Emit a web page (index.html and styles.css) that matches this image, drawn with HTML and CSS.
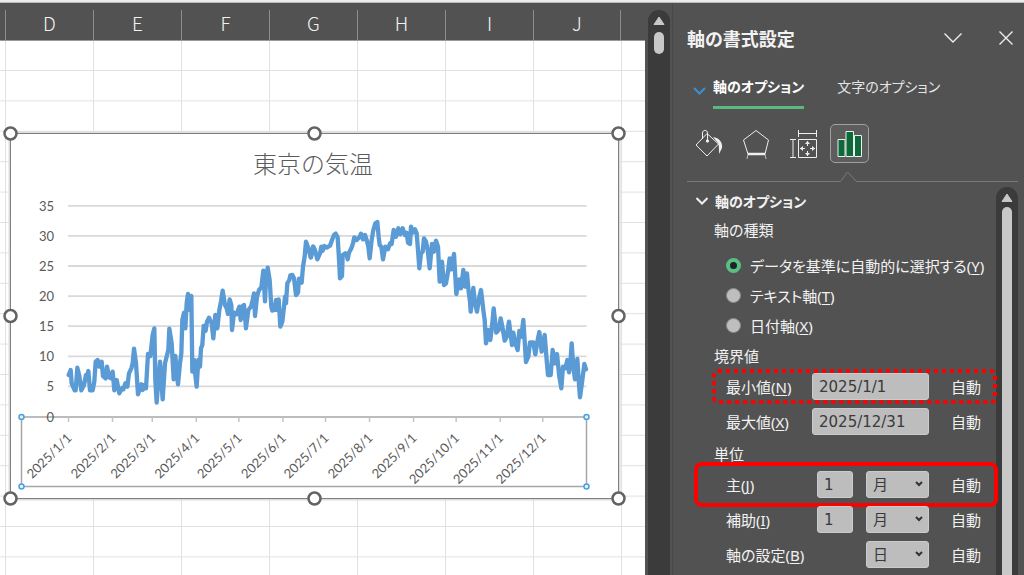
FILE: index.html
```html
<!DOCTYPE html>
<html lang="ja">
<head>
    <meta charset="UTF-8">
    <meta name="viewport" content="width=device-width, initial-scale=1.0">
    <title>東京の気温</title>
    <link rel="stylesheet" href="styles.css">
</head>
<body>
    <div class="top-strip"></div>
    <div class="app">
        <main class="sheet">
            <div class="columns">
                <span>D</span><span>E</span><span>F</span><span>G</span><span>H</span><span>I</span><span>J</span>
            </div>
            <svg class="cells" viewBox="0 41 645 534" role="img" aria-label="東京の気温">
                <!-- cell borders -->
                <g id="grid-lines" stroke="#e1e1e1" stroke-width="1"></g>

                <!-- chart area -->
                <rect x="10.500" y="133.500" width="608" height="365" fill="#fff" stroke="#dcdcdc" stroke-width="4"/>
                <rect x="10.500" y="133.500" width="608" height="365" fill="#fff" stroke="#7f7f7f"/>
                <text class="chart-title" x="313" y="173">東京の気温</text>
                <g id="value-axis"></g>

                <!-- daily temperature -->
                <g class="series">
                    <polyline transform="translate(40 200) scale(.33333)" points="86,525 92,510 95,550 104,571 107,571 112,503 118,528 124,571 132,555 138,525 141,530 145,513 150,571 158,571 163,545 167,485 173,480 177,500 185,485 189,528 197,535 201,500 208,532 213,535 218,515 223,571 230,540 238,580 246,565 250,568 256,550 262,560 267,520 274,505 278,490 282,446 288,490 294,583 304,553 308,570 314,555 318,565 324,462 331,468 338,405 343,385 346,540 350,608 355,540 360,485 368,598 375,490 385,450 388,386 395,430 401,538 406,468 414,553 420,490 424,460 427,360 432,338 436,385 440,310 444,282 449,330 454,288 457,515 462,480 465,515 470,560 475,480 480,500 483,445 487,435 491,378 497,392 501,365 507,353 515,370 520,415 526,345 532,385 538,330 543,305 548,272 555,315 560,325 564,342 569,298 574,315 576,390 582,338 590,343 598,320 602,360 608,318 612,315 618,385 625,330 633,320 638,300 642,280 645,348 651,290 657,270 664,262 670,212 675,304 678,240 683,203 689,240 694,320 697,332 702,315 705,330 708,300 712,330 716,298 721,380 727,365 732,320 735,290 738,310 742,250 748,240 751,226 757,225 762,235 768,285 774,278 777,236 785,248 789,200 794,170 798,125 805,145 812,172 819,140"/>
                    <polyline transform="translate(310 200) scale(.33333)" points="3,172 10,140 15,150 22,178 30,160 34,140 38,152 43,138 50,143 60,137 66,120 72,105 77,101 83,112 86,160 90,235 96,228 98,165 106,160 110,165 113,178 117,158 124,145 129,130 133,112 140,120 148,112 153,101 159,118 165,105 170,120 175,140 179,175 185,120 190,90 196,70 202,66 206,110 209,135 214,140 219,178 226,140 234,148 240,130 245,132 251,90 258,110 265,85 271,103 278,85 285,105 290,98 294,128 300,132 303,80 308,98 315,88 320,100 324,150 328,205 333,160 338,155 342,115 348,125 353,150 359,205 366,132 372,155 378,122 384,140 389,245 396,185 402,255 408,250 414,215 419,175 424,208 432,162 436,230 439,282 448,238 453,265 460,210 466,260 471,220 476,275 480,305 482,335 490,264 495,310 501,335 508,290 513,270 520,330 524,360 528,430 534,390 541,420 547,370 551,325 559,398 566,390 572,355 578,385 584,422 590,410 597,365 606,435 610,398 616,430 623,450 628,393 634,410 640,360 648,486 655,470 660,427 670,427 676,463 682,425 688,396 695,455 704,405 710,480 714,525 722,525 728,450 735,490 741,462 748,530 754,565 759,500 766,505 772,480 777,517 781,490 785,430 790,500 795,538 802,477 806,540 810,592 817,540 823,492 828,508"/>
                </g>

                <!-- selected date axis -->
                <rect x="21.500" y="417" width="565" height="69.500" fill="none" stroke="#a6a6a6" stroke-width="1.500"/>
                <text class="axis-label" x="54" y="422">0</text>
                <g id="date-axis"></g>
                <g class="axis-handles">
                    <circle cx="21.500" cy="417" r="2.500"/>
                    <circle cx="586.500" cy="417" r="2.500"/>
                    <circle cx="21.500" cy="486.500" r="2.500"/>
                    <circle cx="586.500" cy="486.500" r="2.500"/>
                </g>
                <g class="chart-handles">
                    <circle cx="10.500" cy="133.500" r="6"/>
                    <circle cx="314.500" cy="133.500" r="6"/>
                    <circle cx="618.500" cy="133.500" r="6"/>
                    <circle cx="10.500" cy="316" r="6"/>
                    <circle cx="618.500" cy="316" r="6"/>
                    <circle cx="10.500" cy="498.500" r="6"/>
                    <circle cx="314.500" cy="498.500" r="6"/>
                    <circle cx="618.500" cy="498.500" r="6"/>
                </g>
            </svg>
        </main>

        <div class="scrollbar sheet-scroll">
            <svg width="12" height="10" viewBox="0 0 12 10"><path d="M6 1 11 8.500H1z" fill="#c8c8c8" stroke="#c8c8c8" stroke-linejoin="round"/></svg>
            <div class="thumb thumb-short"></div>
        </div>

        <aside class="panel">
            <header class="panel-header">
                <h1>軸の書式設定</h1>
                <button class="icon-btn" aria-label="オプション">
                    <svg width="18" height="10" viewBox="0 0 18 10"><path d="M.500.500 9 9 17.500.500"/></svg>
                </button>
                <button class="icon-btn" aria-label="閉じる">
                    <svg width="14" height="14" viewBox="0 0 14 14"><path d="M.500.500l13 13M13.500.500l-13 13"/></svg>
                </button>
            </header>

            <nav class="tabs">
                <svg class="tab-arrow" width="13" height="8" viewBox="0 0 13 8"><path d="M1 1l5.500 5.500L12 1"/></svg>
                <a class="tab active" href="#">軸のオプション</a>
                <a class="tab" href="#">文字のオプション</a>
            </nav>

            <div class="icons">
                <button class="icon-btn" aria-label="塗りつぶしと線">
                    <svg width="30" height="30" viewBox="0 0 30 30">
                        <path d="M13 4.500 24.500 15 13 27 2 16z"/>
                        <path d="M8.500 10V4c0-3.500 5-3.500 5 0v8" />
                        <circle cx="13.500" cy="12" r="1.200" fill="#eee"/>
                        <path d="M19 8c6 1 10 5 9 11l-3 6c0-5 0-9-1-11z" fill="#eee" stroke="none"/>
                    </svg>
                </button>
                <button class="icon-btn" aria-label="効果">
                    <svg width="30" height="30" viewBox="0 0 30 30">
                        <path d="M15 1.500 27.500 11 24 25H7L2.500 11z"/>
                        <path d="M7 25h17" stroke-width="2.500"/>
                        <path d="M7 25l-1 5M24 25l1 5" opacity=".7"/>
                    </svg>
                </button>
                <button class="icon-btn" aria-label="サイズとプロパティ">
                    <svg width="30" height="30" viewBox="0 0 30 30">
                        <path d="M10.500 10.500h18v18h-18zM10.500 1v7M28.500 1v7M11 4.500h17M2 10.500h6M2 28.500h6M5 11v17"/>
                        <path d="M12 19.500h5M22 19.500h5M19.500 12v5M19.500 22v5"/>
                        <path d="M12 19.500l3-2.500v5zM27 19.500l-3-2.500v5zM19.500 12l-2.500 3h5zM19.500 27l-2.500-3h5z" fill="#eee" stroke="none"/>
                    </svg>
                </button>
                <button class="icon-btn selected" aria-label="軸のオプション">
                    <svg width="28" height="30" viewBox="0 0 28 30">
                        <path d="M2 10.500h7v17H2zM18.500 6.500h7v21h-7zM10 2.500h7.500v25H10z" fill="#0b6a38"/>
                    </svg>
                </button>
            </div>

            <svg class="divider" height="12" viewBox="0 0 331 12"><path d="M0 10.500h153.500l7-9.500 9 9.500H331"/></svg>

            <div class="panel-body">
                <form class="options">
                    <h2>
                        <svg width="12" height="8" viewBox="0 0 12 8"><path d="M.500 1 6 6.500 11.500 1"/></svg>
                        軸のオプション
                    </h2>

                    <h3>軸の種類</h3>
                    <div class="radios">
                        <label><input type="radio" name="axis-type" checked><span>データを基準に自動的に選択する(<u>Y</u>)</span></label>
                        <label><input type="radio" name="axis-type"><span>テキスト軸(<u>T</u>)</span></label>
                        <label><input type="radio" name="axis-type"><span>日付軸(<u>X</u>)</span></label>
                    </div>

                    <h3>境界値</h3>
                    <div class="row">
                        <label for="min">最小値(<u>N</u>)</label>
                        <div class="controls"><input type="text" id="min" class="date" value="2025/1/1"></div>
                        <span>自動</span>
                        <svg class="mark-dotted"><rect x="2" y="2"/></svg>
                    </div>
                    <div class="row">
                        <label for="max">最大値(<u>X</u>)</label>
                        <div class="controls"><input type="text" id="max" class="date" value="2025/12/31"></div>
                        <span>自動</span>
                    </div>

                    <h3>単位</h3>
                    <div class="row marked">
                        <label for="major">主(<u>J</u>)</label>
                        <div class="controls">
                            <input type="text" id="major" class="count" value="1">
                            <div class="select">
                                <select aria-label="主の単位"><option>日</option><option selected>月</option><option>年</option></select>
                                <svg width="8" height="6" viewBox="0 0 8 6"><path d="M1 1l3 3 3-3"/></svg>
                            </div>
                        </div>
                        <span>自動</span>
                    </div>
                    <div class="row">
                        <label for="minor">補助(<u>I</u>)</label>
                        <div class="controls">
                            <input type="text" id="minor" class="count" value="1">
                            <div class="select">
                                <select aria-label="補助の単位"><option>日</option><option selected>月</option><option>年</option></select>
                                <svg width="8" height="6" viewBox="0 0 8 6"><path d="M1 1l3 3 3-3"/></svg>
                            </div>
                        </div>
                        <span>自動</span>
                    </div>
                    <div class="row">
                        <label for="base">軸の設定(<u>B</u>)</label>
                        <div class="controls">
                            <div class="select">
                                <select id="base"><option selected>日</option><option>月</option><option>年</option></select>
                                <svg width="8" height="6" viewBox="0 0 8 6"><path d="M1 1l3 3 3-3"/></svg>
                            </div>
                        </div>
                        <span>自動</span>
                    </div>
                </form>

                <div class="scrollbar">
                    <svg width="12" height="10" viewBox="0 0 12 10"><path d="M6 1 11 8.500H1z" fill="#c8c8c8" stroke="#c8c8c8" stroke-linejoin="round"/></svg>
                    <div class="thumb thumb-long"></div>
                </div>
            </div>
        </aside>
    </div>

    <script src="chart.js"></script>
</body>
</html>
```
FILE: styles.css
```css
* {
    box-sizing: border-box;
}
body {
    margin: 0;
    height: 100vh;
    display: flex;
    flex-direction: column;
    overflow: hidden;
    background-color: #525252;
    color: #f2f2f2;
    font-family: "Noto Sans", "Noto Sans CJK JP", sans-serif;
    font-size: 15px;
}
.top-strip {
    height: 3px;
    background-color: #ececec;
    border-bottom: 1px solid #bbb;
}
.app {
    flex: 1;
    min-height: 0;
    display: flex;
}

/* worksheet */
.sheet {
    flex: 1;
    min-width: 0;
    overflow: hidden;
    background-color: #fff;
}
.columns {
    display: flex;
    height: 38px;
    padding: 7px 0 0 5px;
    overflow: hidden;
    background-color: #525252;
    border-bottom: 1px solid #999;
}
.columns span {
    flex: 0 0 88px;
    border-left: 1px solid #8c8c8c;
    text-align: center;
    font-family: "Noto Sans CJK JP", sans-serif;
    font-size: 19px;
    font-weight: 300;
    line-height: 26px;
}
.columns span:last-child {
    border-right: 1px solid #8c8c8c;
}
.cells {
    display: block;
    width: 100%;
}
.chart-title {
    fill: #5c5c5c;
    font-family: "Noto Sans CJK JP", sans-serif;
    font-size: 24px;
    font-weight: 300;
    text-anchor: middle;
}
.axis-label {
    fill: #595959;
    font-family: Lato, sans-serif;
    font-size: 13px;
    text-anchor: end;
}
.series {
    fill: none;
    stroke: #5b9bd5;
    stroke-width: 13;
    stroke-linejoin: round;
    stroke-linecap: round;
}
.axis-handles {
    fill: #e4f1fb;
    stroke: #4ba0df;
    stroke-width: 1.5;
}
.chart-handles {
    fill: #fff;
    stroke: #636363;
    stroke-width: 2.5;
}

/* scrollbars */
.scrollbar {
    flex: 0 0 22px;
    display: flex;
    flex-direction: column;
    align-items: center;
    padding-top: 6px;
    background-color: #3b3b3b;
    border-radius: 11px 11px 0 0;
}
.sheet-scroll {
    margin: 7px 2px 0 3px;
}
.thumb {
    width: 10px;
    margin-top: 6px;
    background-color: #c8c8c8;
    border-radius: 5px;
}
.thumb-short {
    height: 22px;
}
.thumb-long {
    flex: 1;
    margin-top: 4px;
    border-radius: 5px 5px 0 0;
}

/* format panel */
.panel {
    flex: 0 0 352px;
    display: flex;
    flex-direction: column;
    padding: 0 6px 0 14px;
    border-left: 1px solid #484848;
    font-feature-settings: "palt";
}
.panel svg {
    fill: none;
    stroke: #eee;
}
.icon-btn {
    display: flex;
    align-items: center;
    justify-content: center;
    padding: 0;
    border: 0;
    background: none;
}
.panel-header {
    display: flex;
    align-items: center;
    gap: 37px;
    height: 70px;
    padding-right: 5px;
}
.panel-header svg {
    stroke-width: 1.4;
}
h1 {
    flex: 1;
    margin: 0;
    font-size: 18px;
    font-weight: bold;
}
.tabs {
    display: flex;
    align-items: center;
    height: 36px;
    padding-left: 6px;
    font-size: 14px;
}
.tabs .tab-arrow {
    margin-right: 7px;
    stroke: #3d8fd1;
    stroke-width: 2;
}
.tab {
    height: 36px;
    margin-right: 33px;
    line-height: 28px;
    border-bottom: 3px solid transparent;
    color: #e4e4e4;
    text-decoration: none;
}
.tab.active {
    border-color: #5ab97d;
    color: #fff;
    font-weight: bold;
}
.icons {
    display: flex;
    gap: 8px;
    margin: 15px 0 8px 2px;
}
.icons .icon-btn {
    width: 39px;
    height: 39px;
}
.icons .selected {
    border: 1px solid #a0a0a0;
    border-radius: 5px;
    background-color: #5d5d5d;
}
.panel .divider {
    width: 100%;
    flex: none;
    stroke: #7a7a7a;
}
.panel-body {
    flex: 1;
    min-height: 0;
    display: flex;
    margin-top: 4px;
}
.options {
    flex: 1;
    padding-left: 9px;
}
h2, h3 {
    display: flex;
    align-items: center;
    height: 28px;
    margin: 0;
    font-size: 15px;
}
h2 {
    font-size: 14px;
}
h2 svg {
    stroke-width: 2;
    margin-right: 7px;
}
h3 {
    padding-left: 18px;
    font-weight: normal;
}
.radios {
    padding: 7px 0 1px 30px;
}
.radios label {
    display: flex;
    align-items: center;
    gap: 9px;
    height: 30px;
    white-space: nowrap;
}
input[type="radio"] {
    appearance: none;
    width: 15px;
    height: 15px;
    margin: 0;
    border: 1px solid #8a8a8a;
    border-radius: 50%;
    background-color: #bebebe;
}
input[type="radio"]:checked {
    border: 4px solid #5abf84;
    background-color: #222;
}
.row {
    position: relative;
    display: grid;
    grid-template-columns: 86px 117px auto;
    align-items: center;
    height: 35px;
    padding-left: 30px;
}
.row > span {
    padding-left: 22px;
}
u {
    text-underline-offset: 2px;
}
.controls {
    display: flex;
    justify-content: flex-end;
    gap: 13px;
}
.controls input,
.controls select {
    height: 27px;
    padding: 0 6px;
    border: 1px solid #cbcbcb;
    border-radius: 3px;
    background-color: #bdbdbd;
    color: #3a3a3a;
    font-family: "DejaVu Sans", "Noto Sans CJK JP", sans-serif;
    font-size: 15px;
}
.controls .date {
    width: 117px;
}
.controls .count {
    width: 36px;
}
.select {
    position: relative;
}
.controls select {
    display: block;
    appearance: none;
    width: 63px;
}
.select svg {
    position: absolute;
    top: 10px;
    right: 6px;
    stroke: #333;
    stroke-width: 2;
}

/* red highlights drawn over the rows */
.mark-dotted {
    position: absolute;
    top: 0;
    left: 16px;
    width: calc(100% - 15px);
    height: 35px;
}
.panel .mark-dotted rect {
    width: calc(100% - 4px);
    height: calc(100% - 4px);
    rx: 4px;
    stroke: #f00;
    stroke-width: 4;
    stroke-dasharray: 4 4;
}
.marked::after {
    content: "";
    position: absolute;
    top: -5px;
    right: -2px;
    bottom: -5px;
    left: -2px;
    border: 4px solid #f00;
    border-radius: 8px;
    pointer-events: none;
}
```
FILE: chart.js
```js
const grid = document.getElementById("grid-lines");
const valueAxis = document.getElementById("value-axis");
const dateAxis = document.getElementById("date-axis");

let lines = "";
for (let i = 0; i < 8; i++) {
    const x = 5.5 + i * 88;
    lines += `<line x1="${x}" y1="41" x2="${x}" y2="575"/>`;
}
for (let i = 0; i < 18; i++) {
    const y = 70.5 + i * 30.4;
    lines += `<line x1="0" y1="${y}" x2="645" y2="${y}"/>`;
}
grid.innerHTML = lines;

// 5 to 35 degrees
let values = "";
for (let v = 5; v <= 35; v += 5) {
    const y = 416.5 - v * 6.02;
    values += `<line x1="68" y1="${y}" x2="586.5" y2="${y}" stroke="#d9d9d9" stroke-width="1.8"/>`;
    values += `<text class="axis-label" x="54" y="${y + 5}">${v}</text>`;
}
valueAxis.innerHTML = values;

// first day of each month
let dates = "";
for (let m = 0; m < 12; m++) {
    const day = (Date.UTC(2025, m, 1) - Date.UTC(2025, 0, 1)) / 86400000;
    const x = 68.5 + day * 1.42;
    dates += `<line x1="${x}" y1="417" x2="${x}" y2="422" stroke="#c4c4c4" stroke-width="1.5"/>`;
    dates += `<text class="axis-label" transform="translate(${x + 4} 439) rotate(-45)">2025/${m + 1}/1</text>`;
}
dateAxis.innerHTML = dates;
```
